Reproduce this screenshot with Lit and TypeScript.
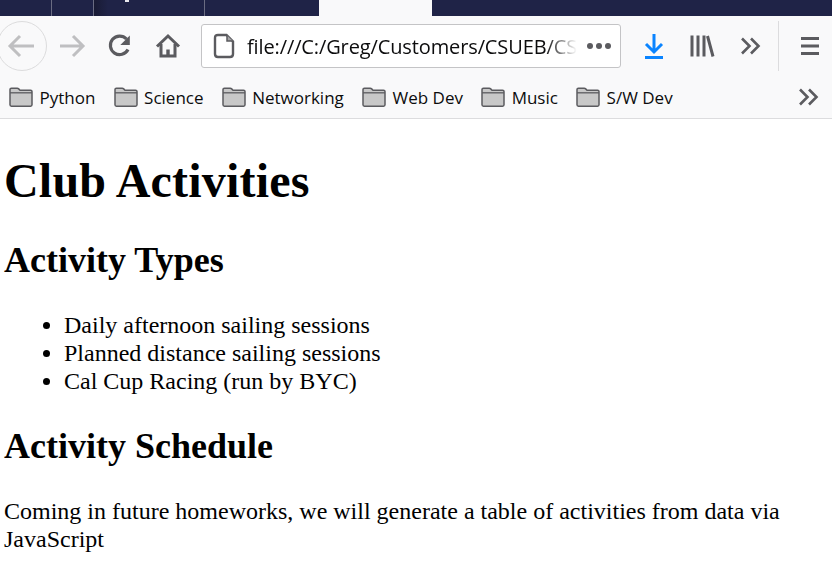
import { LitElement, html, css, svg } from "lit";
import { customElement } from "lit/decorators.js";

const folder = svg`<svg class="folder" width="24" height="22" viewBox="0 0 24 22"><path d="M1 5.500V3.600c0-.9.600-1.400 1.400-1.400h5.900c.6 0 1 .3 1.400.7l1.300 1.300h10.600c.7 0 1.400.6 1.400 1.400v13.200c0 .8-.6 1.400-1.400 1.400H2.400c-.8 0-1.400-.6-1.400-1.400z" fill="#c8c8c8" stroke="#5b5b5f" stroke-width="1.500"/><path d="M1 6.800H23" stroke="#5b5b5f" stroke-width="1.300" fill="none"/></svg>`;

const chevrons = svg`<svg width="22" height="18" viewBox="0 0 22 18" fill="none" stroke="#5b5b5f" stroke-width="2.600"><path d="M2 1.500l7.500 7.500L2 16.500M11 1.500l7.500 7.500L11 16.500"/></svg>`;

@customElement("app-root")
export class AppRoot extends LitElement {
  static styles = css`
    :host { display: block; width: 832px; height: 574px; overflow: hidden; background: #fff; font-family: "Liberation Serif", serif; color: #000; }
    .tabs { height: 16px; background: #1f2347; display: flex; }
    .tab { height: 16px; box-sizing: border-box; border-right: 1px solid #6a6c82; flex: none; }
    .t1 { width: 52px; } .t2 { width: 42px; }
    .t3 { width: 111px; position: relative; background: linear-gradient(to right, #191b34, #1f2347 14px); }
    .t3::after { content: ""; position: absolute; left: 31px; top: 0; width: 4px; height: 2px; background: #e8e8ee; }
    .t4 { width: 114px; flex: none; }
    .active { width: 113px; flex: none; background: #f9f9fa; }
    .toolbar { height: 60px; background: #f9f9fa; display: flex; align-items: center; }
    .back { width: 50px; height: 50px; margin-left: -3px; flex: none; box-sizing: border-box; border: 1px solid #dcdcdd; border-radius: 50%; display: flex; align-items: center; justify-content: center; }
    .ico { flex: none; display: flex; align-items: center; justify-content: center; }
    .fwd { width: 46px; margin-left: 2px; } .reload { width: 48px; margin-left: 1px; } .home { width: 46px; margin-right: 10px; margin-left: 1px; }
    .url { width: 420px; height: 44px; box-sizing: border-box; flex: none; background: #fff; border: 1px solid #c4c4c6; border-radius: 3px; display: flex; align-items: center; padding-left: 11px; }
    .url .text { margin-left: 12px; font: 20px "Open Sans", "Noto Sans", sans-serif; color: #0c0c0d; white-space: nowrap; width: 330px; letter-spacing: -0.12px; -webkit-mask-image: linear-gradient(to right, #000 298px, transparent 330px); mask-image: linear-gradient(to right, #000 298px, transparent 330px); }
    .dots { margin-left: 10px; display: flex; gap: 3px; }
    .dots i { width: 6px; height: 6px; border-radius: 50%; background: #5b5b5f; display: block; }
    .dl { width: 50px; margin-left: 8px; } .lib { width: 46px; } .more { width: 42px; margin-left: 5px; }
    .sep { width: 1px; height: 50px; background: #dcdcde; margin-left: 6px; flex: none; }
    .menu { width: 52px; margin-left: 5px; }
    .bookmarks { height: 42px; background: #f9f9fa; border-bottom: 1px solid #dcdcde; display: flex; align-items: center; padding-left: 9px; font: 17px "Open Sans", "Noto Sans", sans-serif; color: #0c0c0d; }
    .bm { display: flex; align-items: center; gap: 6.500px; margin-right: 18.200px; white-space: nowrap; }
    .folder { flex: none; }
    .bmore { margin-left: auto; margin-right: 12px; display: flex; }
    main { padding: 0 4px; }
    h1 { font-size: 48px; line-height: 55px; margin: 34px 0 0; font-weight: bold; letter-spacing: 0.2px; }
    h2 { font-size: 36px; line-height: 41px; margin: 0; font-weight: bold; }
    .h-a { margin-top: 32px; }
    ul { margin: 30px 0 0; padding: 0 0 0 60px; font-size: 24px; line-height: 28px; }
    .h-b { margin-top: 31px; }
    p { font-size: 24px; line-height: 28px; margin: 30px 0 0; }
  `;

  render() {
    const bms = ["Python", "Science", "Networking", "Web Dev", "Music", "S/W Dev"];
    return html`
      <div class="tabs">
        <div class="tab t1"></div><div class="tab t2"></div><div class="tab t3"></div><div class="t4"></div>
        <div class="active"></div>
      </div>
      <div class="toolbar">
        <div class="back"><svg width="30" height="26" viewBox="0 0 30 26" fill="none" stroke="#bfbfc1" stroke-width="3"><path d="M27 13H3M13 3L3 13l10 10"/></svg></div>
        <div class="ico fwd"><svg width="28" height="26" viewBox="0 0 28 26" fill="none" stroke="#bfbfc1" stroke-width="3"><path d="M2 13h23M15 3l10 10-10 10"/></svg></div>
        <div class="ico reload"><svg width="26" height="26" viewBox="0 0 26 26" fill="none" stroke="#5b5b5f" stroke-width="3.200"><path d="M21 16.500A9.300 9.300 0 1 1 19.500 6"/><path d="M22.800 2.500v9.500h-9.500z" fill="#5b5b5f" stroke="none"/></svg></div>
        <div class="ico home"><svg width="26" height="26" viewBox="0 0 26 26" fill="none" stroke="#5b5b5f" stroke-width="3"><path d="M2 13.500L13 3l11 10.500"/><path d="M6 11v12h14V11"/><rect x="11.300" y="16.500" width="3.400" height="6" fill="#5b5b5f" stroke="none"/></svg></div>
        <div class="url">
          <svg width="22" height="26" viewBox="0 0 22 26" fill="none" stroke="#5b5b5f" stroke-width="2.400" style="flex:none"><path d="M13.500 2H5C3 2 2 3 2 5v16c0 2 1 3 3 3h12c2 0 3-1 3-3V8.500z"/><path d="M14 2.500V8h6" fill="#a5a5a7" stroke-width="1.500"/></svg>
          <span class="text">file:///C:/Greg/Customers/CSUEB/CS</span>
          <span class="dots"><i></i><i></i><i></i></span>
        </div>
        <div class="ico dl"><svg width="22" height="26" viewBox="0 0 22 26" fill="none" stroke="#0a84ff" stroke-width="3"><path d="M11 1v17M3 11l8 8 8-8"/><path d="M2 24.500h18"/></svg></div>
        <div class="ico lib"><svg width="26" height="24" viewBox="0 0 26 24" fill="none" stroke="#5b5b5f" stroke-width="3"><path d="M3 1.500v21M9 1.500v21M15 1.500v21M18.500 2l5.500 20.500"/></svg></div>
        <div class="ico more">${chevrons}</div>
        <div class="sep"></div>
        <div class="ico menu"><svg width="18" height="20" viewBox="0 0 18 20" stroke="#5b5b5f" stroke-width="3"><path d="M0 2.500h18M0 10h18M0 17.500h18"/></svg></div>
      </div>
      <div class="bookmarks">
        ${bms.map((b) => html`<div class="bm">${folder}<span>${b}</span></div>`)}
        <div class="bmore">${chevrons}</div>
      </div>
      <main>
        <h1>Club Activities</h1>
        <h2 class="h-a">Activity Types</h2>
        <ul>
          <li>Daily afternoon sailing sessions</li>
          <li>Planned distance sailing sessions</li>
          <li>Cal Cup Racing (run by BYC)</li>
        </ul>
        <h2 class="h-b">Activity Schedule</h2>
        <p>Coming in future homeworks, we will generate a table of activities from data via JavaScript</p>
      </main>
    `;
  }
}
